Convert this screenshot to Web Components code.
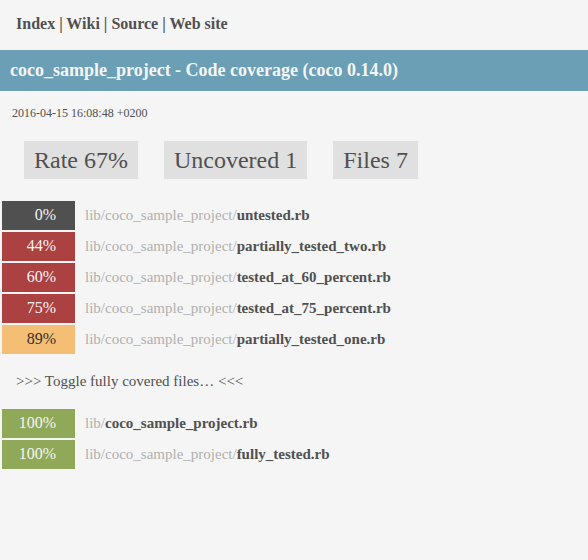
<!DOCTYPE html>
<html lang="en">
<head>
<meta charset="utf-8">
<title>coco_sample_project - Code coverage</title>
<style>
body { margin: 0; background: #f5f5f5; color: #505050; font: 16px/20px "Liberation Serif", "Times New Roman", serif; }
</style>
</head>
<body>
<coverage-report></coverage-report>
<script>
class NavBar extends HTMLElement {
  constructor() {
    super();
    this.attachShadow({ mode: "open" }).innerHTML = `
      <style>
        :host { display: block; padding: 14px 16px 16px; font-weight: bold; }
        a { color: inherit; text-decoration: none; }
      </style>
      <nav><a href="#index">Index</a> | <a href="#wiki">Wiki</a> | <a href="#source">Source</a> | <a href="#site">Web site</a></nav>`;
  }
}
customElements.define("nav-bar", NavBar);

class PageTitle extends HTMLElement {
  constructor() {
    super();
    this.attachShadow({ mode: "open" }).innerHTML = `
      <style>
        :host { display: block; background: #6a9fb5; color: #f5f5f5; padding: 10px; }
        h1 { margin: 0; font-size: 18px; line-height: 21px; }
      </style>
      <h1><slot></slot></h1>`;
  }
}
customElements.define("page-title", PageTitle);

class StatBadge extends HTMLElement {
  constructor() {
    super();
    this.attachShadow({ mode: "open" }).innerHTML = `
      <style>
        :host { display: block; background: #e0e0e0; padding: 4px 10px; font-size: 24px; line-height: 30px; }
      </style>
      <slot></slot>`;
  }
}
customElements.define("stat-badge", StatBadge);

class CoverageTable extends HTMLElement {
  connectedCallback() {
    const rows = JSON.parse(this.getAttribute("rows"));
    this.attachShadow({ mode: "open" }).innerHTML = `
      <style>
        :host { display: block; }
        table { border-spacing: 2px; }
        td { padding: 4px 8px; height: 21px; line-height: 20px; white-space: nowrap; vertical-align: top; font-size: 15px; }
        .rate { width: 46px; padding: 4px 19px 4px 8px; text-align: right; color: #f5f5f5; font-size: 16px; }
        .none { background: #505050; }
        .bad { background: #ac4142; }
        .close { background: #f4bf75; color: #303030; }
        .full { background: #90a959; }
        a { color: #b0b0b0; text-decoration: none; }
        b { color: #505050; }
      </style>
      <table><tbody>${rows.map(([kind, rate, dir, file]) => `
        <tr><td class="rate ${kind}">${rate}</td><td><a href="#${file}">${dir}<b>${file}</b></a></td></tr>`).join("")}
      </tbody></table>`;
  }
}
customElements.define("coverage-table", CoverageTable);

class CoverageReport extends HTMLElement {
  constructor() {
    super();
    this.attachShadow({ mode: "open" }).innerHTML = `
      <style>
        :host { display: block; }
        time { display: block; padding: 14px 12px; font-size: 12px; line-height: 16px; }
        .stats { display: flex; flex-wrap: wrap; gap: 26px; padding: 6px 24px 20px; }
        button { display: block; margin: 15px 16px 16px; padding: 0; border: 0; background: none; color: inherit; font: inherit; font-size: 15px; }
      </style>
      <nav-bar></nav-bar>
      <page-title>coco_sample_project - Code coverage (coco 0.14.0)</page-title>
      <time datetime="2016-04-15T16:08:48+02:00">2016-04-15 16:08:48 +0200</time>
      <div class="stats">
        <stat-badge>Rate 67%</stat-badge><stat-badge>Uncovered 1</stat-badge><stat-badge>Files 7</stat-badge>
      </div>
      <coverage-table rows='[["none","0%","lib/coco_sample_project/","untested.rb"],["bad","44%","lib/coco_sample_project/","partially_tested_two.rb"],["bad","60%","lib/coco_sample_project/","tested_at_60_percent.rb"],["bad","75%","lib/coco_sample_project/","tested_at_75_percent.rb"],["close","89%","lib/coco_sample_project/","partially_tested_one.rb"]]'></coverage-table>
      <button type="button">&gt;&gt;&gt; Toggle fully covered files… &lt;&lt;&lt;</button>
      <coverage-table rows='[["full","100%","lib/","coco_sample_project.rb"],["full","100%","lib/coco_sample_project/","fully_tested.rb"]]'></coverage-table>`;
  }
}
customElements.define("coverage-report", CoverageReport);
</script>
</body>
</html>
